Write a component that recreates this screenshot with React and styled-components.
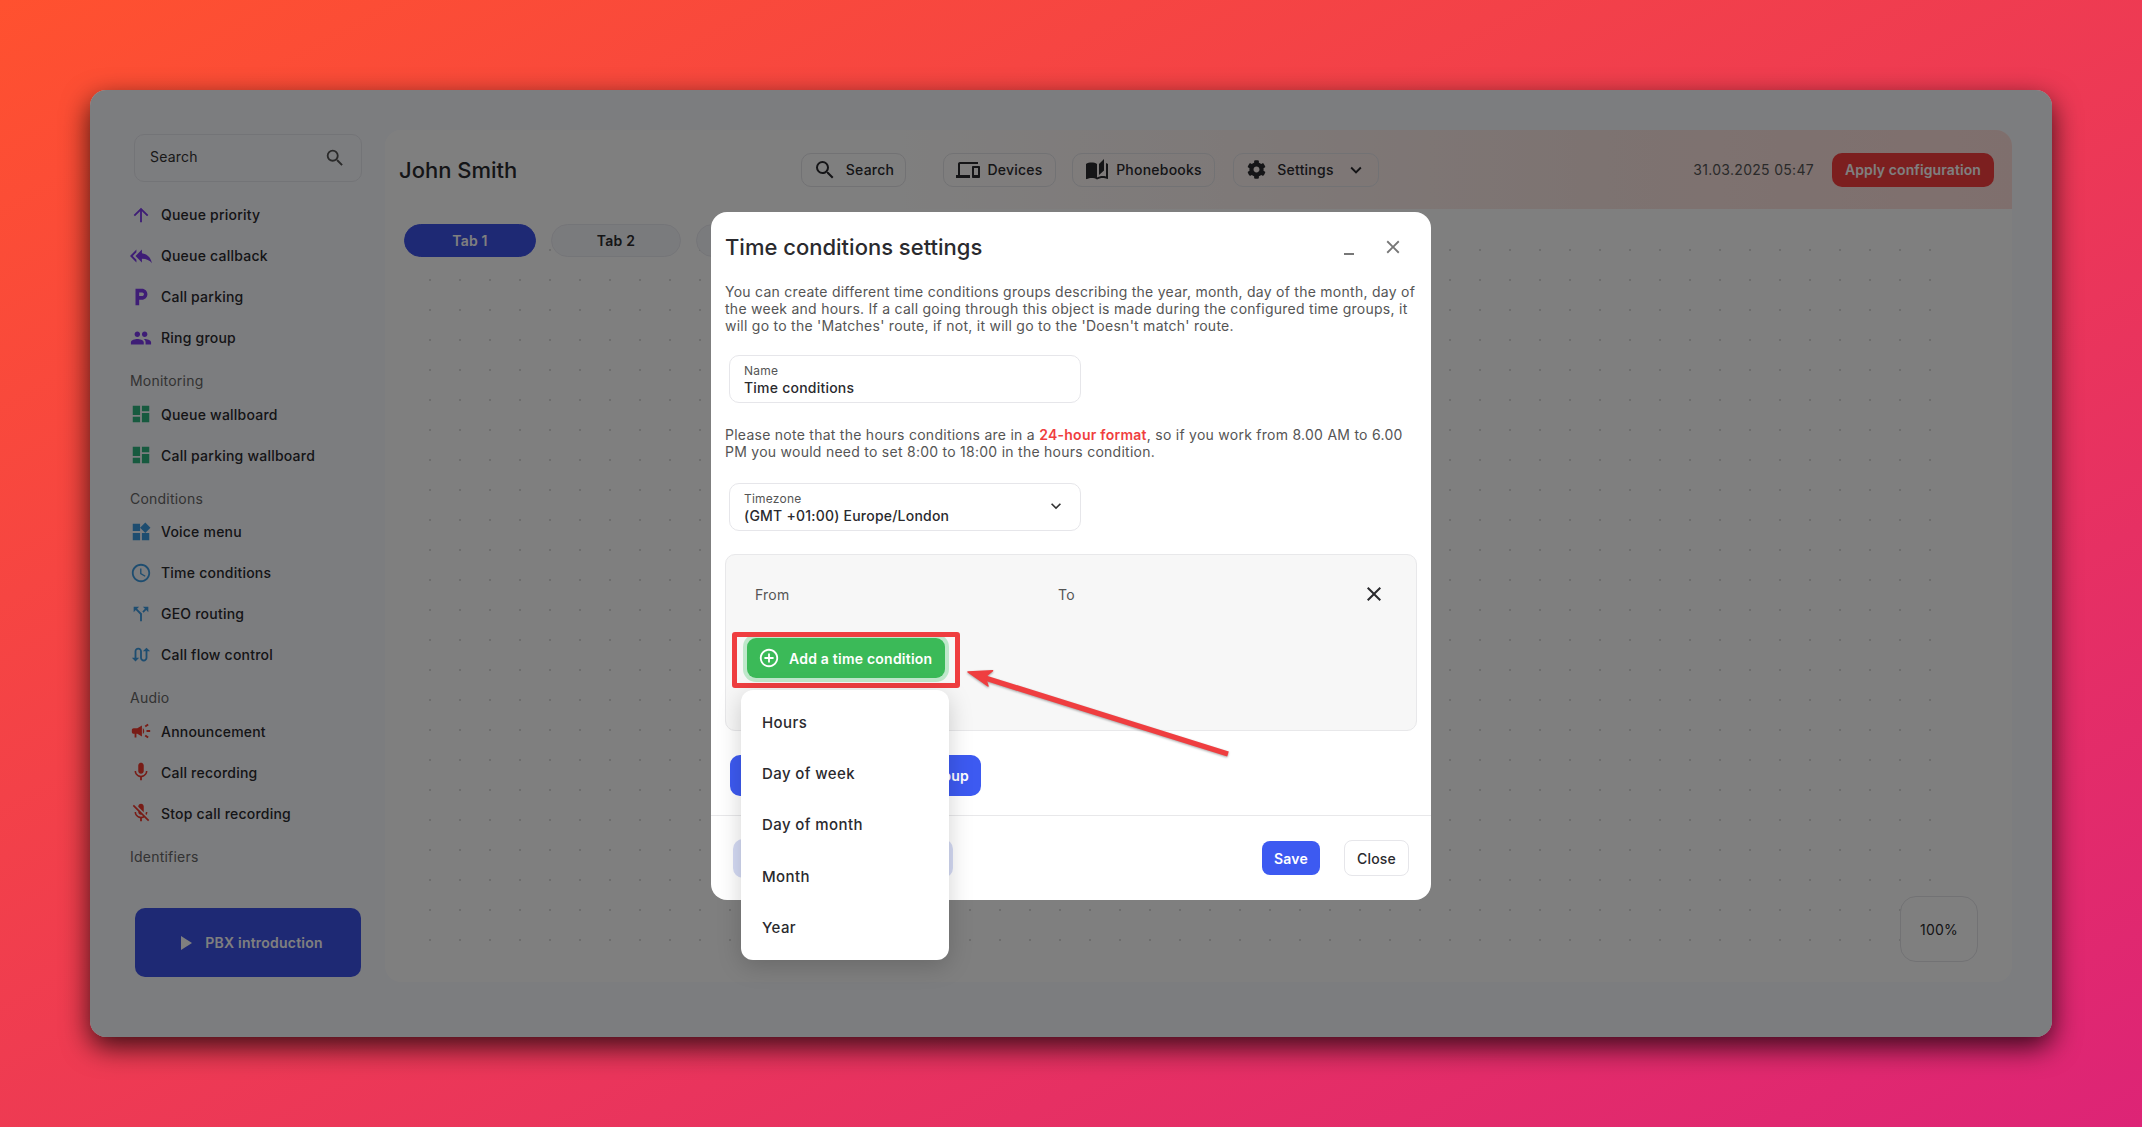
import React from 'react';
import styled, { createGlobalStyle } from 'styled-components';
import {
  MdArrowUpward,
  MdReplyAll,
  MdLocalParking,
  MdPeople,
  MdDashboard,
  MdWidgets,
  MdOutlineAccessTime,
  MdCallSplit,
  MdSwapCalls,
  MdCampaign,
  MdMic,
  MdMicOff,
  MdSearch,
  MdOutlineDevices,
  MdAutoStories,
  MdKeyboardArrowDown,
  MdClose,
  MdPlayArrow,
  MdAddCircleOutline,
} from 'react-icons/md';
import { FaCog } from 'react-icons/fa';

const GlobalStyle = createGlobalStyle`
  html, body {
    margin: 0;
    padding: 0;
  }
  body {
    font-family: Inter, "Noto Sans", sans-serif;
    letter-spacing: 0.22px;
    color: #2a2a2e;
  }
  * {
    box-sizing: border-box;
  }
`;

const Backdrop = styled.div`
  width: 2142px;
  height: 1127px;
  padding: 90px;
  overflow: hidden;
  background: linear-gradient(to bottom right, #ff512f 0%, #dd2476 100%);
`;

const AppWindow = styled.div`
  position: relative;
  width: 1962px;
  height: 947px;
  display: flex;
  border-radius: 16px;
  overflow: hidden;
  background: #f9fafe;
  box-shadow: 0 10px 28px rgba(0, 0, 0, 0.75);
`;

const Sidebar = styled.aside`
  width: 295px;
  flex: none;
  padding: 44px 0 0 40px;
  display: flex;
  flex-direction: column;
`;

const SearchBox = styled.div`
  width: 228px;
  height: 48px;
  margin: 0 0 12px 4px;
  padding: 0 15px 3px 15px;
  display: flex;
  align-items: center;
  justify-content: space-between;
  border: 1px solid #e6e8ee;
  border-radius: 10px;
  font-size: 14px;
  color: #333;
  svg {
    font-size: 22px;
    margin-top: 3px;
    color: #555;
  }
`;

const NavRow = styled.div`
  height: 41px;
  display: flex;
  align-items: center;
  font-size: 14px;
  font-weight: 500;
  white-space: nowrap;
`;

const NavIcon = styled.span`
  width: 31px;
  flex: none;
  display: flex;
  justify-content: center;
  padding-right: 9px;
  font-size: ${(p) => p.$size || 22}px;
  color: ${(p) => p.$color};
`;

const SectionLabel = styled.div`
  height: 22px;
  margin-top: 11.5px;
  margin-bottom: 2px;
  display: flex;
  align-items: center;
  font-size: 14px;
  color: #666;
`;

const IntroButton = styled.div`
  position: absolute;
  left: 45px;
  top: 818px;
  width: 226px;
  height: 69px;
  display: flex;
  align-items: center;
  justify-content: center;
  gap: 8px;
  border-radius: 10px;
  background: #3d52e8;
  color: #fff;
  font-size: 14px;
  font-weight: 600;
  svg {
    font-size: 24px;
  }
`;

const Main = styled.main`
  width: 1627px;
  height: 852px;
  margin-top: 40px;
  flex: none;
  display: flex;
  flex-direction: column;
  border-radius: 16px;
  overflow: hidden;
  background: #fff;
`;

const Header = styled.header`
  height: 79px;
  flex: none;
  padding: 0 18px 0 14px;
  display: flex;
  align-items: center;
  background: linear-gradient(90deg, #ffffff 30%, #fbe6e2 75%, #ffdfdb 100%);
`;

const PageTitle = styled.h1`
  width: 402px;
  margin: 0;
  font-size: 22px;
  font-weight: 500;
  letter-spacing: 0;
`;

const HeaderButton = styled.div`
  height: 34px;
  margin-right: ${(p) => p.$gap || 16}px;
  width: ${(p) => p.$w}px;
  padding-left: ${(p) => p.$pad || 0}px;
  flex: none;
  display: flex;
  align-items: center;
  justify-content: center;
  gap: ${(p) => p.$inner || 7}px;
  border: 1px solid #e4e4e8;
  border-radius: 10px;
  font-size: 14px;
  font-weight: 500;
  svg {
    flex: none;
    font-size: ${(p) => p.$icon || 24}px;
  }
`;

const Chevron = styled(MdKeyboardArrowDown)`
  && {
    font-size: 22px;
  }
`;

const DateText = styled.span`
  margin-left: auto;
  margin-right: 18px;
  font-size: 14px;
  letter-spacing: 0.3px;
  color: #555;
`;

const ApplyButton = styled.div`
  width: 162px;
  height: 34px;
  display: flex;
  align-items: center;
  justify-content: center;
  border-radius: 10px;
  background: #f83e3e;
  color: #fff;
  font-size: 14px;
  font-weight: 600;
  letter-spacing: 0.1px;
`;

const Board = styled.div`
  flex: 1;
  padding: 40px 81px 41px 44px;
  display: flex;
`;

const DotCanvas = styled.div`
  position: relative;
  flex: 1;
  background-image: radial-gradient(circle at 1px 1px, #dcdcdc 1px, transparent 1.2px);
  background-size: 30px 30px;
`;

const TabsRow = styled.div`
  position: absolute;
  left: -25px;
  top: -25px;
  display: flex;
  gap: 15px;
`;

const TabPill = styled.div`
  width: ${(p) => (p.$active ? 132 : 130)}px;
  height: 33px;
  display: flex;
  align-items: center;
  justify-content: center;
  border-radius: 17px;
  font-size: 14px;
  font-weight: 600;
  background: ${(p) => (p.$active ? '#3d52e8' : '#f5f6fa')};
  color: ${(p) => (p.$active ? '#fff' : '#2a2a2e')};
  border: 1px solid ${(p) => (p.$active ? '#3d52e8' : '#e9eaf0')};
`;

const ZoomBadge = styled.div`
  position: absolute;
  right: -47px;
  bottom: -21px;
  width: 78px;
  height: 66px;
  display: flex;
  align-items: center;
  justify-content: center;
  border: 1px solid #e4e4e8;
  border-radius: 16px;
  background: #fff;
  font-size: 14px;
`;

const Overlay = styled.div`
  position: absolute;
  inset: 0;
  background: rgba(0, 0, 0, 0.5);
`;

const Modal = styled.div`
  position: absolute;
  left: 621px;
  top: 122px;
  width: 720px;
  height: 688px;
  display: flex;
  flex-direction: column;
  border-radius: 16px;
  background: #fff;
`;

const ModalHeader = styled.div`
  height: 71px;
  flex: none;
  padding: 0 27px 2px 14px;
  display: flex;
  align-items: center;
  color: #2a2a2e;
`;

const ModalTitle = styled.h2`
  margin: 0 auto 0 0;
  font-size: 22px;
  font-weight: 500;
  letter-spacing: 0;
`;

const WindowControl = styled.span`
  display: flex;
  margin-left: ${(p) => p.$left || 0}px;
  color: #777;
  font-size: 22px;
`;

const MinimizeBar = styled.span`
  display: block;
  width: 10px;
  height: 2px;
  margin-top: 14px;
  background: #777;
`;

const ModalBody = styled.div`
  flex: 1;
  min-height: 0;
  padding: 0 14px;
  display: flex;
  flex-direction: column;
  align-items: flex-start;
`;

const HelpText = styled.p`
  margin: ${(p) => p.$top || 0}px 0 ${(p) => p.$bottom || 0}px;
  width: 692px;
  font-size: 14px;
  line-height: 17px;
  letter-spacing: 0.26px;
  color: #555;
  strong {
    font-weight: 600;
    color: #f03e3e;
  }
`;

const Field = styled.div`
  position: relative;
  width: 352px;
  height: 48px;
  margin-left: 4px;
  padding: 7px 14px 0;
  border: 1px solid #e6e6ea;
  border-radius: 10px;
  svg {
    position: absolute;
    right: 14px;
    top: 12px;
    font-size: 20px;
    color: #333;
  }
`;

const FieldLabel = styled.div`
  font-size: 12px;
  line-height: 15px;
  color: #555;
`;

const FieldValue = styled.div`
  font-size: 14px;
  line-height: 19px;
  font-weight: 500;
  color: #2a2a2e;
`;

const GroupBox = styled.div`
  position: relative;
  width: 692px;
  height: 177px;
  margin-top: 23px;
  padding: 27px 30px 0 29px;
  border: 1px solid #e8e8ea;
  border-radius: 10px;
  background: #f7f7f7;
`;

const RangeRow = styled.div`
  height: 24px;
  display: flex;
  align-items: center;
  font-size: 14px;
  color: #555;
  span:first-child {
    width: 303px;
  }
  svg {
    margin-left: auto;
    font-size: 24px;
    color: #2a2a2e;
  }
`;

const GreenButton = styled.div`
  width: 198px;
  height: 40px;
  margin: 32px 0 0 -8px;
  padding-left: 11px;
  display: flex;
  align-items: center;
  gap: 9px;
  border-radius: 9px;
  background: #3bba58;
  box-shadow: 0 0 0 4px #bfe8cb;
  color: #fff;
  font-size: 14px;
  font-weight: 600;
  white-space: nowrap;
  svg {
    font-size: 22px;
  }
`;

const BlueButton = styled.div`
  width: 251px;
  height: 41px;
  margin: 24px 0 0 5px;
  padding-right: 12px;
  display: flex;
  align-items: center;
  justify-content: flex-end;
  border-radius: 10px;
  background: #3d5af1;
  color: #fff;
  font-size: 14px;
  font-weight: 600;
`;

const ModalFooter = styled.div`
  height: 85px;
  flex: none;
  padding: 0 22px;
  display: flex;
  align-items: center;
  border-top: 1px solid #e8e8ea;
`;

const GhostButton = styled.div`
  width: 220px;
  height: 39px;
  margin-right: auto;
  border-radius: 10px;
  background: #d5dbf5;
`;

const SaveButton = styled.div`
  width: 58px;
  height: 34px;
  margin-right: 24px;
  display: flex;
  align-items: center;
  justify-content: center;
  border-radius: 8px;
  background: #3d5af1;
  color: #fff;
  font-size: 14px;
  font-weight: 600;
`;

const CloseButton = styled.div`
  width: 65px;
  height: 36px;
  display: flex;
  align-items: center;
  justify-content: center;
  border: 1px solid #e6e6ea;
  border-radius: 8px;
  font-size: 14px;
  font-weight: 500;
  color: #2a2a2e;
`;

const Dropdown = styled.ul`
  position: absolute;
  left: 651px;
  top: 600px;
  width: 208px;
  height: 270px;
  margin: 0;
  padding: 7px 0 0;
  list-style: none;
  border-radius: 12px;
  background: #fff;
  box-shadow: 0 6px 24px rgba(0, 0, 0, 0.18);
`;

const DropdownItem = styled.li`
  height: 51.2px;
  padding-left: 21px;
  display: flex;
  align-items: center;
  font-size: 15px;
  font-weight: 500;
  letter-spacing: 0.4px;
  color: #2a2a2e;
`;

const Highlight = styled.div`
  position: absolute;
  left: 642px;
  top: 542px;
  width: 228px;
  height: 56px;
  border: 5px solid #ef3e40;
  border-radius: 3px;
`;

const Arrow = styled.svg`
  position: absolute;
  left: 860px;
  top: 560px;
  filter: drop-shadow(0 1px 1px rgba(0, 0, 0, 0.35));
`;

const navSections = [
  {
    items: [
      { label: 'Queue priority', Icon: MdArrowUpward, color: '#7c3aed' },
      { label: 'Queue callback', Icon: MdReplyAll, color: '#7c3aed', size: 24 },
      { label: 'Call parking', Icon: MdLocalParking, color: '#7c3aed', size: 24 },
      { label: 'Ring group', Icon: MdPeople, color: '#7c3aed', size: 24 },
    ],
  },
  {
    title: 'Monitoring',
    items: [
      { label: 'Queue wallboard', Icon: MdDashboard, color: '#2fb57f', size: 24 },
      { label: 'Call parking wallboard', Icon: MdDashboard, color: '#2fb57f', size: 24 },
    ],
  },
  {
    title: 'Conditions',
    items: [
      { label: 'Voice menu', Icon: MdWidgets, color: '#3d9be0', size: 24 },
      { label: 'Time conditions', Icon: MdOutlineAccessTime, color: '#3d9be0', size: 24 },
      { label: 'GEO routing', Icon: MdCallSplit, color: '#3d9be0', size: 22 },
      { label: 'Call flow control', Icon: MdSwapCalls, color: '#3d9be0', size: 22 },
    ],
  },
  {
    title: 'Audio',
    items: [
      { label: 'Announcement', Icon: MdCampaign, color: '#f0382c', size: 24 },
      { label: 'Call recording', Icon: MdMic, color: '#f0382c', size: 24 },
      { label: 'Stop call recording', Icon: MdMicOff, color: '#f0382c', size: 24 },
    ],
  },
  { title: 'Identifiers', items: [] },
];

const addOptions = ['Hours', 'Day of week', 'Day of month', 'Month', 'Year'];

export default function App() {
  return (
    <Backdrop>
      <GlobalStyle />
      <AppWindow>
        <Sidebar>
          <SearchBox>
            Search
            <MdSearch />
          </SearchBox>
          {navSections.map((section) => (
            <React.Fragment key={section.title || 'top'}>
              {section.title && <SectionLabel>{section.title}</SectionLabel>}
              {section.items.map(({ label, Icon, color, size }) => (
                <NavRow key={label}>
                  <NavIcon $color={color} $size={size}>
                    <Icon />
                  </NavIcon>
                  {label}
                </NavRow>
              ))}
            </React.Fragment>
          ))}
        </Sidebar>
        <IntroButton>
          <MdPlayArrow />
          PBX introduction
        </IntroButton>
        <Main>
          <Header>
            <PageTitle>John Smith</PageTitle>
            <HeaderButton $w={105} $gap={37} $inner={9}>
              <MdSearch />
              Search
            </HeaderButton>
            <HeaderButton $w={113}>
              <MdOutlineDevices />
              Devices
            </HeaderButton>
            <HeaderButton $w={143} $gap={18}>
              <MdAutoStories />
              Phonebooks
            </HeaderButton>
            <HeaderButton $w={146} $gap={0} $inner={11} $icon={19} $pad={2}>
              <FaCog />
              Settings
              <Chevron />
            </HeaderButton>
            <DateText>31.03.2025 05:47</DateText>
            <ApplyButton>Apply configuration</ApplyButton>
          </Header>
          <Board>
            <DotCanvas>
              <TabsRow>
                <TabPill $active>Tab 1</TabPill>
                <TabPill>Tab 2</TabPill>
                <TabPill>Tab 3</TabPill>
              </TabsRow>
              <ZoomBadge>100%</ZoomBadge>
            </DotCanvas>
          </Board>
        </Main>
        <Overlay />
        <Modal>
          <ModalHeader>
            <ModalTitle>Time conditions settings</ModalTitle>
            <WindowControl>
              <MinimizeBar />
            </WindowControl>
            <WindowControl $left={28}>
              <MdClose />
            </WindowControl>
          </ModalHeader>
          <ModalBody>
            <HelpText $bottom={21}>
              You can create different time conditions groups describing the year, month, day of
              the month, day of the week and hours. If a call going through this object is made
              during the configured time groups, it will go to the 'Matches' route, if not, it will
              go to the 'Doesn't match' route.
            </HelpText>
            <Field>
              <FieldLabel>Name</FieldLabel>
              <FieldValue>Time conditions</FieldValue>
            </Field>
            <HelpText $top={23} $bottom={23}>
              Please note that the hours conditions are in a <strong>24-hour format</strong>, so if
              you work from 8.00 AM to 6.00 PM you would need to set 8:00 to 18:00 in the hours
              condition.
            </HelpText>
            <Field>
              <FieldLabel>Timezone</FieldLabel>
              <FieldValue>(GMT +01:00) Europe/London</FieldValue>
              <MdKeyboardArrowDown />
            </Field>
            <GroupBox>
              <RangeRow>
                <span>From</span>
                <span>To</span>
                <MdClose />
              </RangeRow>
              <GreenButton>
                <MdAddCircleOutline />
                Add a time condition
              </GreenButton>
            </GroupBox>
            <BlueButton>Add a time group</BlueButton>
          </ModalBody>
          <ModalFooter>
            <GhostButton />
            <SaveButton>Save</SaveButton>
            <CloseButton>Close</CloseButton>
          </ModalFooter>
        </Modal>
        <Highlight />
        <Dropdown>
          {addOptions.map((option) => (
            <DropdownItem key={option}>{option}</DropdownItem>
          ))}
        </Dropdown>
        <Arrow width="300" height="120" viewBox="0 0 300 120">
          <path d="M278 104 L32 27" stroke="#ef3e40" strokeWidth="5.5" fill="none" />
          <path
            d="M18 22 L42.6 20.7 L35 27 L38 36 Z"
            fill="#ef3e40"
            stroke="#ef3e40"
            strokeWidth="1.5"
            strokeLinejoin="round"
          />
        </Arrow>
      </AppWindow>
    </Backdrop>
  );
}
